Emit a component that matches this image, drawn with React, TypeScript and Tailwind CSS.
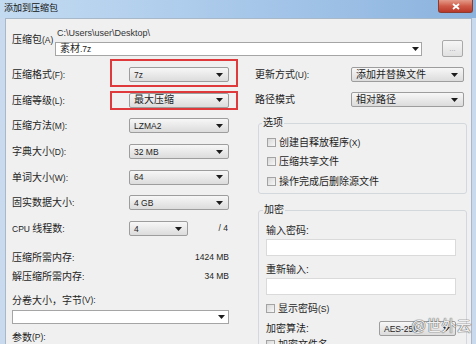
import React from 'react'

// Latin runs in the reference render noticeably smaller than the CJK glyphs
function T({ s }: { s: string }) {
  const parts = s.split(/([\u3000-\u9fff\uff00-\uffef]+)/).filter(Boolean)
  return (
    <>
      {parts.map((p, i) =>
        /[\u3000-\u9fff\uff00-\uffef]/.test(p) ? (
          <span key={i}>{p}</span>
        ) : (
          <span key={i} className="text-[8.5px]">
            {p}
          </span>
        ),
      )}
    </>
  )
}

const Arrow = () => (
  <svg width="7" height="4" viewBox="0 0 7 4" className="shrink-0">
    <path d="M0 0h7L3.5 4z" fill="#1c1c1c" />
  </svg>
)

function Combo({ text, className = '' }: { text: string; className?: string }) {
  return (
    <div
      className={`flex h-[15px] items-center justify-between rounded-[2px] border border-[#9d9d9d] bg-gradient-to-b from-[#f7f7f7] to-[#dcdcdc] pl-[4px] pr-[5px] leading-none ${className}`}
    >
      <span className="whitespace-nowrap">
        <T s={text} />
      </span>
      <Arrow />
    </div>
  )
}

function Check({ label }: { label: string }) {
  return (
    <div className="flex h-[14px] items-center">
      <span className="h-[9px] w-[9px] border border-[#a3a3a3] bg-gradient-to-br from-[#d8d8d8] to-[#f7f7f7]" />
      <span className="ml-[3px] whitespace-nowrap">
        <T s={label} />
      </span>
    </div>
  )
}

const leftRows: { label: string; value: string }[] = [
  { label: '压缩格式(F):', value: '7z' },
  { label: '压缩等级(L):', value: '最大压缩' },
  { label: '压缩方法(M):', value: 'LZMA2' },
  { label: '字典大小(D):', value: '32 MB' },
  { label: '单词大小(W):', value: '64' },
  { label: '固实数据大小:', value: '4 GB' },
]

export default function App() {
  return (
    <div className="relative flex h-[344px] w-[476px] flex-col overflow-hidden bg-[#c9daee] font-['Liberation_Sans','Noto_Sans_CJK_SC',sans-serif] text-[10px] text-[#1e1e1e]">
      {/* title bar */}
      <div className="relative h-[18px] shrink-0 bg-gradient-to-r from-[#c3dbf1] via-[#a8c8ea] to-[#8bb3de]">
        <span className="absolute left-[4px] top-[2px] text-[9px] leading-[12px] text-[#111]">添加到压缩包</span>
        <div className="absolute right-[3px] top-0 flex h-[13px] w-[35px] items-center justify-center rounded-b-[3px] border border-t-0 border-[#8c3b31] bg-gradient-to-b from-[#e49a8a] via-[#cf5a48] to-[#b8382a]">
          <svg width="8" height="7" viewBox="0 0 8 7">
            <path d="M1 1l6 5M7 1L1 6" stroke="#fff" strokeWidth="1.8" />
          </svg>
        </div>
      </div>

      {/* body */}
      <div className="ml-[5px] mr-[4px] flex flex-1 flex-col border-l border-r border-t border-[#a9b8c9] bg-[#f0f0f0] pt-[8px]">
        {/* archive row */}
        <div className="flex pl-[6px] pr-[8px]">
          <div className="w-[43px] shrink-0 whitespace-nowrap pt-[7px] leading-[12px]">
            <T s="压缩包(A)" />
          </div>
          <div className="flex flex-1 flex-col">
            <div className="pl-[2px] text-[9px] leading-[12px] text-[#333]">C:\Users\user\Desktop\</div>
            <div className="mt-[1px] flex h-[17px] items-center">
              <div className="flex h-[14px] flex-1 items-center justify-between border border-[#a5a5a5] bg-white pl-[4px] pr-[2px]">
                <span>
                  <T s="素材.7z" />
                </span>
                <Arrow />
              </div>
              <div className="ml-[20px] flex h-[17px] w-[21px] items-center justify-center rounded-[2px] border border-[#a9a9a9] bg-gradient-to-b from-[#f6f6f6] to-[#e1e1e1] text-[8px] text-[#a0a0a0]">
                ...
              </div>
            </div>
          </div>
        </div>

        <div className="mt-[10px] flex">
          {/* left column */}
          <div className="flex w-[224px] flex-col pl-[6px]">
            <div className="flex flex-col gap-[10.7px]">
              {leftRows.map((r) => (
                <div key={r.label} className="flex h-[15px] items-center">
                  <span className="w-[117px] shrink-0 whitespace-nowrap">
                    <T s={r.label} />
                  </span>
                  <Combo text={r.value} className="w-[100px]" />
                </div>
              ))}
              <div className="flex h-[15px] w-[217px] items-center">
                <span className="w-[117px] shrink-0 whitespace-nowrap">
                  <T s="CPU 线程数:" />
                </span>
                <Combo text="4" className="w-[59px]" />
                <span className="ml-auto pr-[1px] text-[8.5px]">/ 4</span>
              </div>
            </div>
            <div className="mt-[14px] flex h-[14px] w-[217px] items-center justify-between">
              <span>
                <T s="压缩所需内存:" />
              </span>
              <span className="text-[8.5px]">1424 MB</span>
            </div>
            <div className="mt-[5px] flex h-[14px] w-[217px] items-center justify-between">
              <span>
                <T s="解压缩所需内存:" />
              </span>
              <span className="text-[8.5px]">34 MB</span>
            </div>
            <div className="mt-[10px] flex h-[14px] items-center">
              <T s="分卷大小，字节(V):" />
            </div>
            <div className="mt-[3px] flex h-[14px] w-[217px] items-center justify-end border border-[#a5a5a5] bg-white pr-[3px]">
              <Arrow />
            </div>
            <div className="mt-[6px] flex h-[14px] items-center">
              <T s="参数(P):" />
            </div>
          </div>

          {/* right column */}
          <div className="ml-[25px] flex w-[212px] flex-col">
            <div className="flex flex-col gap-[10px]">
              <div className="flex h-[15px] items-center">
                <span className="w-[96px] shrink-0">
                  <T s="更新方式(U):" />
                </span>
                <Combo text="添加并替换文件" className="w-[113px]" />
              </div>
              <div className="flex h-[15px] items-center">
                <span className="w-[96px] shrink-0">路径模式</span>
                <Combo text="相对路径" className="w-[113px]" />
              </div>
            </div>

            <div className="relative ml-[3px] mt-[16px] w-[209px] rounded-[3px] border border-[#d3d8dd] pb-[5px] pl-[8px] pt-[11px]">
              <span className="absolute -top-[7px] left-[3px] bg-[#f0f0f0] px-[1px] leading-[12px]">选项</span>
              <div className="flex flex-col gap-[5.5px]">
                <Check label="创建自释放程序(X)" />
                <Check label="压缩共享文件" />
                <Check label="操作完成后删除源文件" />
              </div>
            </div>

            <div className="relative ml-[3px] mt-[16px] w-[209px] rounded-[3px] border border-[#d3d8dd] pl-[7px] pr-[10px] pt-[12px]">
              <span className="absolute -top-[7px] left-[4px] bg-[#f0f0f0] px-[1px] leading-[12px]">加密</span>
              <div className="flex h-[14px] items-center">输入密码:</div>
              <div className="mt-[2px] h-[17px] border border-[#dadada] bg-white" />
              <div className="mt-[6px] flex h-[14px] items-center">重新输入:</div>
              <div className="mt-[2px] h-[17px] border border-[#dadada] bg-white" />
              <div className="mt-[6px]">
                <Check label="显示密码(S)" />
              </div>
              <div className="mt-[6px] flex h-[15px] items-center">
                <span className="w-[113px] shrink-0">加密算法:</span>
                <Combo text="AES-256" className="w-[78px]" />
              </div>
              <div className="mt-[1px]">
                <Check label="加密文件名" />
              </div>
            </div>
          </div>
        </div>
      </div>

      {/* red annotation boxes */}
      <div className="pointer-events-none absolute left-[110px] top-[59px] h-[28px] w-[128px] border-2 border-[#e0393b]" />
      <div className="pointer-events-none absolute left-[110px] top-[91px] h-[19px] w-[128px] border-2 border-[#e0393b]" />

      {/* watermark */}
      <span className="pointer-events-none absolute left-[411px] top-[316px] whitespace-nowrap text-[15px] leading-[20px] text-white/90 [text-shadow:0_0_1px_#666,0_0_1px_#666,0_0_1px_#666]">
        @世外云
      </span>
    </div>
  )
}
